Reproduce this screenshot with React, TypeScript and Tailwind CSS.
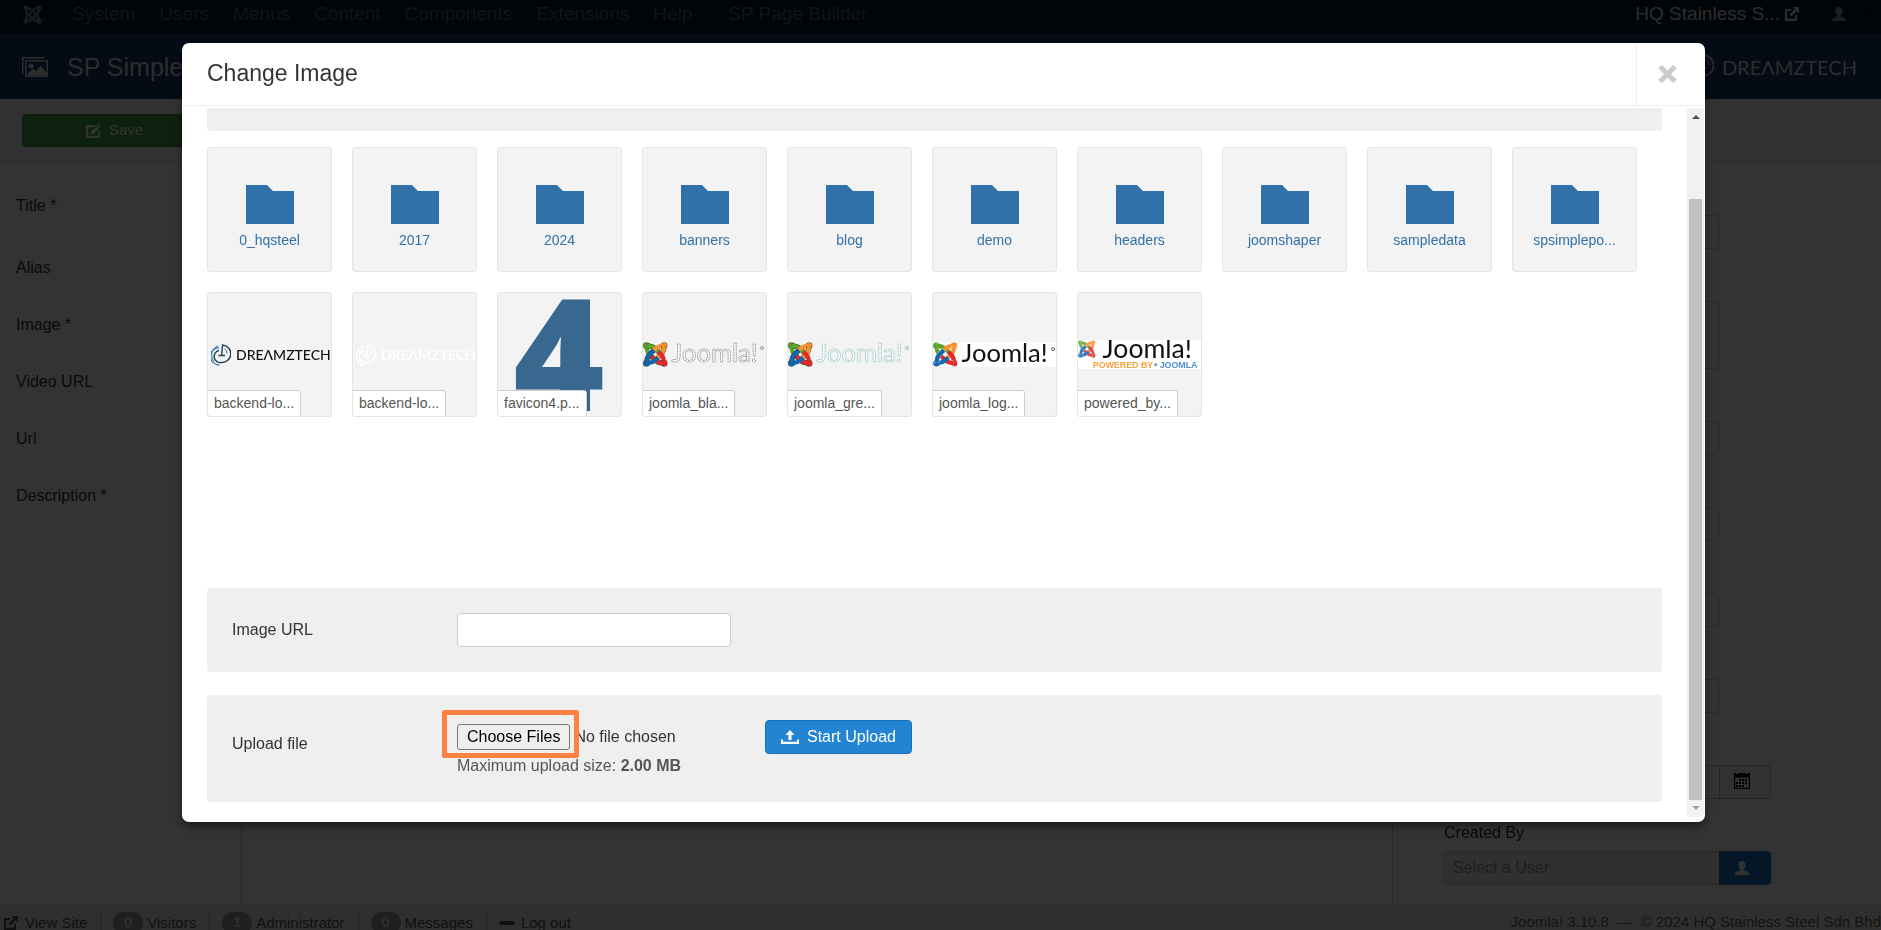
import type { ReactNode } from "react";
import { FaJoomla } from "react-icons/fa";

const menuItems = ["System", "Users", "Menus", "Content", "Components", "Extensions", "Help"];

const fieldLabels = ["Alias", "Image *", "Video URL", "Url", "Description *"];

const folders = [
  "0_hqsteel",
  "2017",
  "2024",
  "banners",
  "blog",
  "demo",
  "headers",
  "joomshaper",
  "sampledata",
  "spsimplepo...",
];

const counters = [
  { count: 0, label: "Visitors" },
  { count: 1, label: "Administrator" },
  { count: 0, label: "Messages" },
];

function ExternalIcon({ className }: { className?: string }) {
  return (
    <svg viewBox="0 0 14 14" className={className} fill="currentColor" aria-hidden="true">
      <path d="M0 2h7L5 4H2.200v7.800H10V9l2-2v7H0z" />
      <path d="M7.500 0H14v6.500l-2.200-2.200-5.300 5.300-2.100-2.100 5.300-5.300z" />
    </svg>
  );
}

function UserIcon({ className }: { className?: string }) {
  return (
    <svg viewBox="0 0 16 15" className={className} fill="currentColor" aria-hidden="true">
      <path d="M8 0c2.300 0 3.800 1.600 3.800 4.200 0 1.900-.8 3.700-2 4.600v1.300c3.400.4 5.700 1.900 6.200 4.900H0c.5-3 2.800-4.500 6.200-4.900V8.800c-1.200-.9-2-2.700-2-4.600C4.200 1.600 5.700 0 8 0z" />
    </svg>
  );
}

function PicturesIcon() {
  return (
    <svg viewBox="0 0 26 20" className="h-5 w-[26px]" fill="currentColor" aria-hidden="true">
      <path d="M0 0h23v1.500H1.500V17H0z" />
      <path fillRule="evenodd" d="M3 3h23v17H3zM4.500 4.500v14h20v-14z" />
      <circle cx="9" cy="9" r="2.500" />
      <path d="M5.500 18.500v-2l6-5 2.500 2.500 4.500-5.500 6 7v3z" />
    </svg>
  );
}

function EditIcon() {
  return (
    <svg viewBox="0 0 15 14" className="h-[14px] w-[15px]" fill="currentColor" aria-hidden="true">
      <path d="M0 1h9.500L7.500 3.200H2.200v8.600H12V8l2-2v8H0z" />
      <path d="M12.500 0 15 2.400l-1.400 1.400-2.500-2.400zM10.400 2.100l2.500 2.500-5.400 5.200-3 .7.6-3z" />
    </svg>
  );
}

function CalendarIcon() {
  return (
    <svg viewBox="0 0 16 16" className="h-4 w-4" fill="currentColor" aria-hidden="true">
      <path fillRule="evenodd" d="M0 0h2v1h2V0h8v1h2V0h2v16H0zM1.200 4.500v10.300h13.600V4.500z" />
      <path d="M5 6h2v2H5zM8 6h2v2H8zM11 6h2v2h-2zM2 9h2v2H2zM5 9h2v2H5zM8 9h2v2H8zM11 9h2v2h-2zM2 12h2v2H2zM5 12h2v2H5zM8 12h2v2H8z" />
    </svg>
  );
}

function UploadIcon() {
  return (
    <svg viewBox="0 0 18 14" className="h-[14px] w-[18px]" fill="currentColor" aria-hidden="true">
      <path d="M9 0l4.500 5H10.500v5h-3V5H4.500z" />
      <path d="M0 9.500h2v2.300h14V9.500h2V14H0z" />
    </svg>
  );
}

// Circular "D" mark used in front of the DREAMZTECH word
function DreamzMark({ outer, inner, className }: { outer: string; inner: string; className?: string }) {
  return (
    <svg viewBox="0 0 20 22" className={className} fill="none" aria-hidden="true">
      <path d="M8 3.500A8 8 0 0 0 8.500 21" stroke={outer} strokeWidth="1.300" />
      <path d="M7 1.800A10 10 0 0 0 3 17.500" stroke={outer} strokeWidth="1" />
      <path d="M8 6.500a6 6 0 0 0 2.500 12A8.300 8.300 0 0 0 11.500 1l-.8 10.500" stroke={inner} strokeWidth="1.400" />
      <path d="M7.500 11.500H14" stroke={inner} strokeWidth="1.400" />
      <path d="M13.500 4.500a6 6 0 0 1 2.500 5" stroke={outer} strokeWidth="1" />
    </svg>
  );
}

const joomlaArms = [
  { color: "#5ba42e", turn: "rotate(0 16 16)" },
  { color: "#f8932f", turn: "rotate(90 16 16)" },
  { color: "#e02a2b", turn: "rotate(180 16 16)" },
  { color: "#1367ad", turn: "rotate(270 16 16)" },
];

function JoomlaMark({ outline }: { outline?: string }) {
  return (
    <>
      {joomlaArms.map((arm) => (
        <g key={arm.color} transform={arm.turn} fill="none" strokeLinejoin="round">
          <circle cx="4.500" cy="4.500" r="4.300" fill={arm.color} stroke={outline} strokeWidth="0.600" />
          <path d="M5 5Q4.500 11.500 8 15.500L12 19.500" stroke={arm.color} strokeWidth="5.600" />
          <path d="M5 5Q11.500 4.500 15.500 8L21.500 14" stroke={outline ?? "#ffffff"} strokeWidth="6.400" />
          <path d="M5 5Q11.500 4.500 15.500 8L21.500 14" stroke={arm.color} strokeWidth="5.600" />
        </g>
      ))}
    </>
  );
}

function JoomlaOutlineLogo({ stroke }: { stroke: string }) {
  return (
    <svg viewBox="0 0 125 26" className="h-[26px] w-[125px]" aria-hidden="true">
      <svg x="0" y="0" width="25" height="25" viewBox="0 0 32 32">
        <JoomlaMark outline="#2b3a1c" />
      </svg>
      <text
        x="29"
        y="20"
        fontFamily="Lato, sans-serif"
        fontSize="26"
        fill="#fbfbfb"
        stroke={stroke}
        strokeWidth="0.700"
        strokeDasharray="1.500 0.700"
      >
        Joomla!
      </text>
      <circle cx="121" cy="6" r="1.500" fill="none" stroke={stroke} strokeWidth="0.800" />
    </svg>
  );
}

function JoomlaSolidLogo() {
  return (
    <svg viewBox="0 0 125 25" className="h-[25px] w-[125px] bg-white" aria-hidden="true">
      <svg x="0" y="0" width="25" height="25" viewBox="0 0 32 32">
        <JoomlaMark />
      </svg>
      <text x="29" y="20" fontFamily="Lato, sans-serif" fontSize="26" fill="#111111">
        Joomla!
      </text>
      <circle cx="122" cy="7" r="1.500" fill="none" stroke="#333333" strokeWidth="0.800" />
    </svg>
  );
}

function JoomlaPoweredLogo() {
  return (
    <svg viewBox="0 0 125 29" className="h-[29px] w-[125px] bg-white" aria-hidden="true">
      <svg x="0" y="0" width="18" height="18" viewBox="0 0 32 32" opacity="0.850">
        <JoomlaMark />
      </svg>
      <text x="25" y="18" fontFamily="Lato, sans-serif" fontSize="27" fill="#111111">
        Joomla!
      </text>
      <text x="15" y="28" fontFamily="'Liberation Sans', Arial, sans-serif" fontWeight="700" fontSize="9" fill="#f5a33c">
        POWERED BY
      </text>
      <circle cx="79" cy="25" r="1.500" fill="#5b9bd5" />
      <text x="83" y="28" fontFamily="'Liberation Sans', Arial, sans-serif" fontWeight="700" fontSize="9" fill="#4a8fd0">
        JOOMLA
      </text>
    </svg>
  );
}

function DreamzThumb({ white }: { white?: boolean }) {
  return (
    <span
      className={`flex w-full items-center gap-[5px] pl-[3px] font-[Lato,sans-serif] text-[14px] leading-5 font-medium ${
        white ? "text-white" : "text-[#111]"
      }`}
    >
      <DreamzMark
        outer={white ? "#ffffff" : "#3d7cae"}
        inner={white ? "#ffffff" : "#1d4258"}
        className="h-[22px] w-5 shrink-0"
      />
      DREΛMZTECH
    </span>
  );
}

const files: { name: string; preview: ReactNode }[] = [
  { name: "backend-lo...", preview: <DreamzThumb /> },
  { name: "backend-lo...", preview: <DreamzThumb white /> },
  {
    name: "favicon4.p...",
    preview: (
      <svg viewBox="0 0 125 125" className="h-[125px] w-[125px] shrink-0" aria-hidden="true">
        <text x="62" y="119" textAnchor="middle" fontFamily="'Open Sans', sans-serif" fontWeight="800" fontSize="156" fill="#38688f">
          4
        </text>
      </svg>
    ),
  },
  { name: "joomla_bla...", preview: <JoomlaOutlineLogo stroke="#777777" /> },
  { name: "joomla_gre...", preview: <JoomlaOutlineLogo stroke="#7fb5b5" /> },
  { name: "joomla_log...", preview: <JoomlaSolidLogo /> },
  { name: "powered_by...", preview: <JoomlaPoweredLogo /> },
];

function TopBar() {
  return (
    <nav className="flex h-[34px] items-center bg-[#0a1a2c] pr-[10px] pb-[6px] pl-[22px] text-[19px] leading-6 whitespace-nowrap text-[#5a6068]">
      <FaJoomla className="mr-[29px] h-[21px] w-[21px] text-[#808488]" />
      <div className="flex gap-6">
        {menuItems.map((item) => (
          <a key={item} href="#">
            {item}
          </a>
        ))}
        <a href="#" className="ml-3">
          SP Page Builder
        </a>
      </div>
      <a href="#" className="ml-auto flex items-center gap-[5px] text-[#d9d9d9]">
        HQ Stainless S...
        <ExternalIcon className="h-[14px] w-[14px]" />
      </a>
      <button type="button" aria-label="User menu" className="ml-8 flex items-center gap-4 text-[#8b8f94]">
        <UserIcon className="h-[14px] w-4" />
        <span className="border-x-4 border-t-4 border-x-transparent border-t-black" />
      </button>
    </nav>
  );
}

function PageHeader() {
  return (
    <header className="flex h-[65px] items-center bg-[#1a3867] pr-6 pl-[22px] text-[#d9d9d9]">
      <PicturesIcon />
      <h1 className="ml-[19px] text-[25px] leading-8">SP Simple</h1>
      <div className="ml-auto flex items-center gap-2 font-[Lato,sans-serif] text-[20px] leading-6">
        <DreamzMark outer="#d9d9d9" inner="#d9d9d9" className="h-[26px] w-6" />
        DREΛMZTECH
      </div>
    </header>
  );
}

function SideFields() {
  const box = "block w-[275px] rounded-[4px] border border-[#ccc] bg-white";
  return (
    <aside className="flex w-[488px] flex-col gap-[52px] pt-[52px] pl-[51px] text-base leading-5 text-[#333]">
      <input aria-label="Status" className={`${box} h-[34px]`} />
      <textarea aria-label="Tags" className={`${box} h-[68px] resize-none`} />
      <input aria-label="Category" className={`${box} h-[34px]`} />
      <input aria-label="Access" className={`${box} h-[34px]`} />
      <input aria-label="Language" className={`${box} h-[34px]`} />
      <input aria-label="Ordering" className={`${box} h-[34px]`} />
      <div>
        <div className="flex">
          <input aria-label="Created Date" className="h-[34px] w-[275px] rounded-l-[4px] border border-r-0 border-[#bbb] bg-white" />
          <button
            type="button"
            aria-label="Open the calendar"
            className="flex h-[34px] w-[52px] items-start justify-center rounded-r-[4px] border border-[#bbb] bg-[#f3f3f3] pt-[7px] pr-[6px] text-black"
          >
            <CalendarIcon />
          </button>
        </div>
        <label htmlFor="created-by" className="mt-6 mb-2 block">
          Created By
        </label>
        <div className="flex">
          <input
            id="created-by"
            placeholder="Select a User"
            className="h-[34px] w-[275px] rounded-l-[4px] border border-r-0 border-[#ccc] bg-[#eee] px-2 placeholder:text-[#999]"
          />
          <button
            type="button"
            aria-label="Select user"
            className="flex h-[34px] w-[52px] items-center justify-center rounded-r-[4px] bg-[#1a75c4] pr-[6px] text-white"
          >
            <UserIcon className="h-[14px] w-4" />
          </button>
        </div>
      </div>
    </aside>
  );
}

function StatusBar() {
  return (
    <footer className="flex h-[25px] shrink-0 items-start overflow-hidden border-t border-[#d4d4d4] bg-[#ebebeb] pl-1 text-[15px] leading-5 whitespace-nowrap text-[#555]">
      <div className="flex items-center pt-[6px]">
        <a href="#" className="flex items-center gap-[7px]">
          <ExternalIcon className="h-[14px] w-[14px]" />
          View Site
        </a>
        {counters.map((item) => (
          <div key={item.label} className="ml-[13px] flex items-center border-l border-[#aaa] pl-3">
            <span className="mr-1 h-[22px] w-[30px] rounded-full bg-[#999] text-center font-bold text-[#ebebeb]">
              {item.count}
            </span>
            {item.label}
          </div>
        ))}
        <a href="#" className="ml-[13px] flex items-center gap-[6px] border-l border-[#aaa] pl-3">
          <span className="h-1 w-4 rounded-sm bg-[#555]" />
          Log out
        </a>
      </div>
      <p className="ml-auto pt-[6px] text-[#666]">
        Joomla! 3.10.8 &nbsp;—&nbsp; © 2024 HQ Stainless Steel Sdn Bhd
      </p>
    </footer>
  );
}

function MediaGrid() {
  return (
    <div className="mt-4 mb-4 flex min-h-[425px] flex-wrap content-start gap-5">
      {folders.map((name) => (
        <a
          key={name}
          href="#"
          className="flex h-[125px] w-[125px] flex-col items-center rounded-[3px] border border-[#e5e5e5] bg-[#f3f3f3] pt-[37px] text-[14px] leading-5 text-[#3071a9]"
        >
          <svg viewBox="0 0 48 39" className="mb-[6px] h-[39px] w-12" fill="#3071a9" aria-hidden="true">
            <path d="M0 0h21l6 6h21v33H0z" />
          </svg>
          {name}
        </a>
      ))}
      {files.map((file, index) => (
        <a
          key={index}
          href="#"
          className="relative flex h-[125px] w-[125px] items-center justify-center overflow-hidden rounded-[3px] border border-[#e5e5e5] bg-[#f3f3f3] text-[14px] leading-[25px] text-[#555]"
        >
          {file.preview}
          <span className="absolute -bottom-px -left-px rounded-tr-[3px] rounded-bl-[3px] border border-[#ccc] bg-white px-[6px]">
            {file.name}
          </span>
        </a>
      ))}
    </div>
  );
}

function ScrollTrack() {
  return (
    <div className="mr-px flex w-[17px] flex-col items-center bg-[#f1f1f1]" aria-hidden="true">
      <div className="mt-[7px] border-x-4 border-b-4 border-x-transparent border-b-[#505050]" />
      <div className="mt-20 mb-[6px] w-[13px] flex-1 bg-[#c1c1c1]" />
      <div className="mb-[7px] border-x-4 border-t-4 border-x-transparent border-t-[#a3a3a3]" />
    </div>
  );
}

function ChangeImageModal() {
  return (
    <div className="fixed inset-x-0 top-0 pt-[43px] pr-[176px] pl-[182px]">
      <section
        role="dialog"
        aria-labelledby="modal-title"
        className="rounded-[7px] bg-white pb-[5px] text-base leading-5 text-[#333] shadow-[0_4px_9px_rgba(0,0,0,0.5)]"
      >
        <header className="flex h-[63px] items-stretch border-b border-[#eee]">
          <h3 id="modal-title" className="flex-1 pt-[14px] pl-[25px] text-[23px] leading-8">
            Change Image
          </h3>
          <button
            type="button"
            aria-label="Close"
            className="flex w-[69px] items-center border-l border-[#eee] pl-[21px] text-[#ccc]"
          >
            <svg viewBox="0 0 19 18" className="h-[18px] w-[19px]" stroke="currentColor" strokeWidth="5" aria-hidden="true">
              <path d="M2 1.500l15 15M17 1.500l-15 15" />
            </svg>
          </button>
        </header>

        <div className="flex pt-[2px]">
          <div className="min-w-0 flex-1 px-[25px] pb-[15px]">
            <div className="h-[23px] rounded-b-[4px] bg-[#efefef]" />
            <MediaGrid />

            <div className="mb-[23px] flex items-center rounded-[4px] bg-[#efefef] p-[25px]">
              <label htmlFor="image-url" className="w-[225px]">
                Image URL
              </label>
              <input id="image-url" type="text" className="h-[34px] w-[274px] rounded-[4px] border border-[#ccc] bg-white px-2" />
            </div>

            <div className="flex items-start rounded-[4px] bg-[#efefef] p-[25px]">
              <label htmlFor="upload-file" className="w-[225px] pt-[14px]">
                Upload file
              </label>
              <div className="relative">
                <div className="flex items-center">
                  <input
                    id="upload-file"
                    type="file"
                    multiple
                    className="h-[26px] w-[308px] leading-6 file:h-[26px] file:rounded-[3px] file:border file:border-solid file:border-[#767676] file:bg-[#efefef] file:px-[9px] file:text-black"
                  />
                  <button
                    type="button"
                    className="flex h-[34px] items-center gap-2 rounded-[4px] border border-[#1a6fb5] bg-[#2384d3] px-[15px] text-white"
                  >
                    <UploadIcon />
                    Start Upload
                  </button>
                </div>
                <p className="leading-[23px] text-[#555]">
                  Maximum upload size: <strong>2.00 MB</strong>
                </p>
                <div className="pointer-events-none absolute -top-[10px] -left-[15px] h-12 w-[137px] rounded-[2px] border-5 border-[#ff8243]" />
              </div>
            </div>
          </div>
          <ScrollTrack />
        </div>
      </section>
    </div>
  );
}

export default function App() {
  return (
    <div className="flex h-screen flex-col overflow-hidden bg-white font-['Liberation_Sans',Arial,sans-serif]">
      <TopBar />
      <PageHeader />
      <div className="h-16 border-b border-[#dedede] bg-[#f5f5f5] pt-[15px] pl-[22px]">
        <button
          type="button"
          className="flex h-[33px] w-[185px] items-center justify-center gap-2 rounded-[4px] border border-[#3a8a3a] bg-[#46a546] text-[15px] text-white"
        >
          <EditIcon />
          Save
        </button>
      </div>
      <main className="flex min-h-0 flex-1 overflow-hidden">
        <div className="w-[242px] border-r border-[#bfbfbf] pt-[14px] pl-4 text-base text-[#333]">
          <p className="mb-[5px] flex h-[57px] items-center">Title *</p>
          {fieldLabels.map((label) => (
            <p key={label} className="flex h-[57px] items-center">
              {label}
            </p>
          ))}
        </div>
        <div className="flex-1 border-r border-[#bfbfbf]" />
        <SideFields />
      </main>
      <StatusBar />

      <div className="fixed inset-0 bg-black/80" />
      <ChangeImageModal />
    </div>
  );
}
